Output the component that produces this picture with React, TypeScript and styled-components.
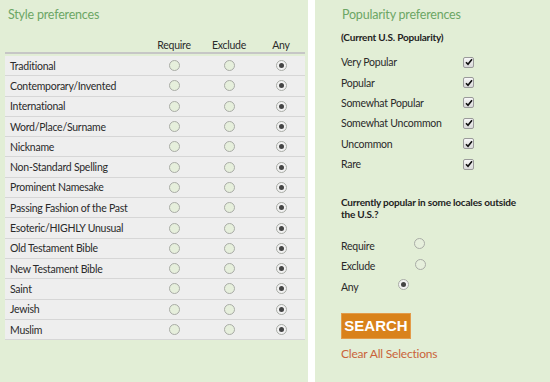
import React from "react";
import styled, { createGlobalStyle } from "styled-components";

const Global = createGlobalStyle`
  html, body { margin: 0; padding: 0; background: #ffffff; }
  body { font-family: Lato, "Open Sans", sans-serif; color: #2a2a2a; }
  * { box-sizing: border-box; }
`;

const Page = styled.div`
  display: flex;
  gap: 7px;
  width: 550px;
  height: 382px;
  overflow: hidden;
`;

const Panel = styled.section<{ $w?: number }>`
  background: #e2eed6;
  ${(p) => (p.$w ? `width: ${p.$w}px; flex: none;` : "flex: 1;")}
  height: 382px;
`;

const LeftInner = styled.div`
  padding: 7px 3px 0 5px;
`;

const Title = styled.h2<{ $indent?: number }>`
  margin: 0;
  padding-left: ${(p) => p.$indent ?? 3}px;
  font-size: 12.5px;
  font-weight: 400;
  letter-spacing: -0.2px;
  color: #6ca665;
  line-height: 16px;
`;

const Grid = styled.div`
  display: grid;
  grid-template-columns: 142px 54px 56px 48px;
  align-items: center;
  font-size: 10.5px;
  letter-spacing: -0.25px;
`;

const HeadRow = styled(Grid)`
  margin-top: 16px;
  height: 15px;
  border-bottom: 2px solid #c6c6c6;
  line-height: 12px;
  padding-bottom: 3px;
`;

const HeadCell = styled.div`
  text-align: center;
  align-self: end;
`;

const Body = styled.div`
  padding-top: 2px;
`;

const Row = styled(Grid)`
  height: 20.3px;
  background: #eeeeee;
  border-bottom: 1px solid #d6d6d6;
`;

const Label = styled.div`
  padding-left: 5px;
  white-space: nowrap;
`;

const Cell = styled.div`
  display: flex;
  justify-content: center;
`;

const Radio = styled.span<{ $on?: boolean }>`
  display: inline-block;
  width: 11px;
  height: 11px;
  border-radius: 50%;
  border: 1px solid #a9aca6;
  background: ${(p) => (p.$on ? "#f2f2f2" : "#e6efdc")};
  position: relative;
  &::after {
    content: "";
    display: ${(p) => (p.$on ? "block" : "none")};
    position: absolute;
    left: 2px;
    top: 2px;
    width: 5px;
    height: 5px;
    border-radius: 50%;
    background: #444444;
  }
`;

const RightInner = styled.div`
  padding: 7px 0 0 26px;
`;

const Sub = styled.div`
  margin-top: 6px;
  font-size: 10px;
  font-weight: 700;
  letter-spacing: -0.2px;
  color: #222;
  line-height: 16px;
`;

const CheckList = styled.div`
  margin-top: 7px;
`;

const CheckRow = styled.div`
  display: grid;
  grid-template-columns: 122px 12px;
  align-items: center;
  height: 20.4px;
  font-size: 10.5px;
  letter-spacing: -0.25px;
`;

const CheckBox = styled.span`
  display: inline-flex;
  align-items: center;
  justify-content: center;
  width: 11px;
  height: 11px;
  border: 1px solid #9a9a9a;
  border-radius: 2px;
  background: linear-gradient(#f7f7f7, #d9d9d9);
`;

const Question = styled.div`
  margin-top: 22px;
  width: 185px;
  font-size: 10px;
  font-weight: 700;
  letter-spacing: -0.2px;
  line-height: 12px;
  color: #222;
`;

const Options = styled.div`
  margin-top: 15px;
`;

const OptRow = styled.div`
  display: flex;
  align-items: center;
  height: 20.5px;
  font-size: 10.5px;
  letter-spacing: -0.25px;
`;

const OptRadio = styled(Radio)`
  margin-left: 40px;
  margin-top: -4px;
`;

const SearchButton = styled.button`
  display: block;
  margin-top: 16px;
  width: 70px;
  height: 26px;
  padding: 0;
  background: #d9821b;
  border: 1px solid #e39b4a;
  color: #ffffff;
  font-family: "Liberation Sans", Arial, sans-serif;
  font-weight: 700;
  font-size: 15px;
  cursor: pointer;
`;

const ClearLink = styled.a`
  display: block;
  margin-top: 7px;
  font-size: 12px;
  letter-spacing: -0.2px;
  color: #c9633a;
  text-decoration: none;
`;

const styles = [
  "Traditional",
  "Contemporary/Invented",
  "International",
  "Word/Place/Surname",
  "Nickname",
  "Non-Standard Spelling",
  "Prominent Namesake",
  "Passing Fashion of the Past",
  "Esoteric/HIGHLY Unusual",
  "Old Testament Bible",
  "New Testament Bible",
  "Saint",
  "Jewish",
  "Muslim",
];

const pops = [
  "Very Popular",
  "Popular",
  "Somewhat Popular",
  "Somewhat Uncommon",
  "Uncommon",
  "Rare",
];

const Check = () => (
  <svg width="8" height="8" viewBox="0 0 8 8">
    <path d="M1 4.2 L3 6.3 L7 1.2" fill="none" stroke="#111" strokeWidth="1.6" />
  </svg>
);

export default function App() {
  return (
    <>
      <Global />
      <Page>
        <Panel $w={308}>
          <LeftInner>
            <Title>Style preferences</Title>
            <HeadRow>
              <div />
              <HeadCell>Require</HeadCell>
              <HeadCell>Exclude</HeadCell>
              <HeadCell>Any</HeadCell>
            </HeadRow>
            <Body>
              {styles.map((s) => (
                <Row key={s}>
                  <Label>{s}</Label>
                  <Cell><Radio /></Cell>
                  <Cell><Radio /></Cell>
                  <Cell><Radio $on /></Cell>
                </Row>
              ))}
            </Body>
          </LeftInner>
        </Panel>
        <Panel>
          <RightInner>
            <Title $indent={1}>Popularity preferences</Title>
            <Sub>(Current U.S. Popularity)</Sub>
            <CheckList>
              {pops.map((p) => (
                <CheckRow key={p}>
                  <span>{p}</span>
                  <CheckBox><Check /></CheckBox>
                </CheckRow>
              ))}
            </CheckList>
            <Question>Currently popular in some locales outside the U.S.?</Question>
            <Options>
              <OptRow>Require<OptRadio /></OptRow>
              <OptRow>Exclude<OptRadio /></OptRow>
              <OptRow>Any<OptRadio $on /></OptRow>
            </Options>
            <SearchButton>SEARCH</SearchButton>
            <ClearLink href="#">Clear All Selections</ClearLink>
          </RightInner>
        </Panel>
      </Page>
    </>
  );
}
